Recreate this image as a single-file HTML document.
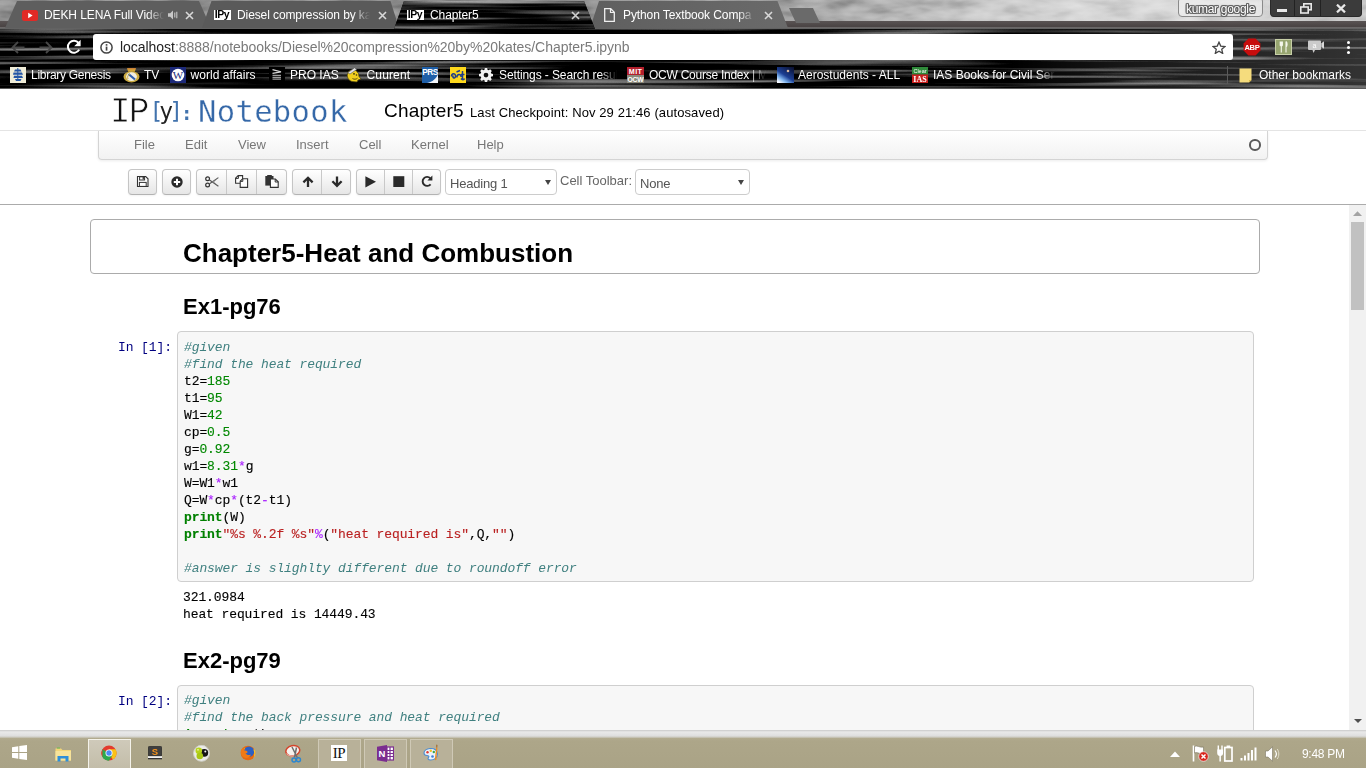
<!DOCTYPE html>
<html>
<head>
<meta charset="utf-8">
<title>Chapter5</title>
<style>
*{box-sizing:border-box;margin:0;padding:0}
html,body{width:1366px;height:768px;overflow:hidden;background:#fff;font-family:"Liberation Sans",sans-serif;}
.abs{position:absolute}
#root{position:relative;width:1366px;height:768px;overflow:hidden;background:#fff}

/* ---------- browser frame ---------- */
.tab{top:1px;height:27px}
.tabtxt{top:8px;font-size:12px;color:#fff;white-space:nowrap;overflow:hidden;letter-spacing:-0.1px}
.chrome-txt{font-size:12px;color:#fff;white-space:nowrap;letter-spacing:-0.1px}
#urlbar{left:93px;top:34px;width:1140px;height:26px;background:#fff;border-radius:3px}
#urltxt{left:120px;top:39px;font-size:14px;color:#7a7a7a;white-space:nowrap;letter-spacing:-0.035px}
#urltxt b{font-weight:normal;color:#222}
.mk{-webkit-mask-image:linear-gradient(90deg,#000 0,#000 calc(100% - 17px),transparent 100%);mask-image:linear-gradient(90deg,#000 0,#000 calc(100% - 17px),transparent 100%)}
.bm{top:68px;font-size:12px;color:#fff;white-space:nowrap}


/* chrome details */
#frame{left:0;top:0;width:1366px;height:29px;background:linear-gradient(90deg,#8c8c8c 0,#8a8a8a 300px,#929292 600px,#a2a2a2 800px,#b4b4b4 900px,#cacaca 1000px,#d4d4d4 1100px,#dadada 1180px,#c8c8c8 1366px)}
#frameband{left:0;top:21px;width:1366px;height:8px;background:linear-gradient(#5a5454 0,#4b4545 5px,#4b4545 6px,#8a8a8a 7px,#3a3a3a 8px)}
#navbar{left:0;top:29px;width:1366px;height:60px;background:
 linear-gradient(90deg,rgba(70,70,70,.0) 0,rgba(90,90,90,.55) 30%,rgba(60,60,60,.2) 60%,rgba(90,90,90,.5) 100%) 0 16px/1366px 3px no-repeat,
 linear-gradient(90deg,rgba(80,80,80,.5) 0,rgba(60,60,60,.15) 40%,rgba(90,90,90,.5) 75%,rgba(60,60,60,.2) 100%) 0 33px/1366px 3px no-repeat,
 linear-gradient(90deg,rgba(60,60,60,.2) 0,rgba(90,90,90,.5) 50%,rgba(70,70,70,.3) 100%) 0 44px/1366px 2px no-repeat,
 linear-gradient(90deg,rgba(90,90,90,.5) 0,rgba(60,60,60,.2) 50%,rgba(90,90,90,.5) 100%) 0 54px/1366px 3px no-repeat,
 #050505}
#navbot{left:0;top:88px;width:1366px;height:1px;background:#5a5a5a}
.tabi{background:#5e5e5e}
.taba{background:
 linear-gradient(90deg,rgba(120,120,120,.6),rgba(80,80,80,.25) 50%,rgba(120,120,120,.55)) 0 6px/100% 3px no-repeat,
 linear-gradient(90deg,rgba(90,90,90,.3),rgba(130,130,130,.6) 60%,rgba(80,80,80,.3)) 0 13px/100% 3px no-repeat,
 linear-gradient(90deg,rgba(120,120,120,.55),rgba(80,80,80,.25) 40%,rgba(120,120,120,.5)) 0 20px/100% 3px no-repeat,
 #111}
.x{position:absolute;top:11px;width:9px;height:9px}
.fav{position:absolute;top:10px;width:17px;height:10px;background:#fff;color:#000;font-size:10.500px;line-height:9px;font-weight:bold;letter-spacing:-0.500px;text-align:center;overflow:visible;white-space:nowrap;text-indent:-1px}
#wctl{left:1270px;top:0;width:92px;height:17px;background:#3b3b3b;border-radius:0 0 4px 4px;border:1px solid #2a2a2a;border-top:none}
#prof{left:1178px;top:-3.500px;width:85px;height:20px;border:1px solid #8a8a8a;border-radius:4px;background:rgba(255,255,255,.38);color:#fff;font-size:12px;line-height:21px;text-align:center;letter-spacing:-0.300px;text-shadow:0 0 1px #555,0 0 2px #555,1px 0 0 #666,-1px 0 0 #666,0 1px 0 #666,0 -1px 0 #666,1px 1px 0 #777,-1px -1px 0 #777,1px -1px 0 #777,-1px 1px 0 #777;white-space:nowrap;padding-top:1px}


.tbtn{top:739px;height:29px;border:1px solid #cfc9b6;border-bottom:none;background:#b8b199}

/* ---------- page ---------- */
#page{left:0;top:89px;width:1366px;height:641px;background:#fff;overflow:hidden}
#winborder{left:0;top:730px;width:1366px;height:8px;background:linear-gradient(#c9c9c9 0,#e9e9e9 2px,#dedede 6px,#bdb8a5 8px)}
#taskbar{left:0;top:738px;width:1366px;height:30px;background:linear-gradient(#b2ab90 0,#ada689 3px,#aaa386 100%)}

/* notebook */
#logo_ip{-webkit-text-stroke:0.7px #fff;left:110px;top:90px;font-family:"Liberation Mono",monospace;font-size:34px;line-height:40px;color:#111;letter-spacing:-1.5px;white-space:nowrap;transform:scaleY(1.09);transform-origin:0 0}
#logo_y{left:149.5px;top:96.7px;font-family:"DejaVu Sans Mono","Liberation Mono",monospace;font-size:23px;line-height:28px;color:#4273ad;letter-spacing:-4px;white-space:nowrap}
#logo_y i{font-style:normal;color:#222}
#logo_c{left:181px;top:98.5px;font-weight:bold;font-family:"DejaVu Sans Mono","Liberation Mono",monospace;font-size:19px;line-height:28px;color:#4273ad;white-space:nowrap}
#logo_nb{-webkit-text-stroke:0.3px #fff;left:198px;top:91.5px;font-family:"DejaVu Sans Mono","Liberation Mono",monospace;font-size:30.5px;line-height:40px;color:#3568a8;letter-spacing:0.35px;white-space:nowrap}
#nbname{left:384px;top:100px;font-size:19px;letter-spacing:0.2px;line-height:22px;color:#000;white-space:nowrap}
#ckpt{left:470px;top:104px;font-size:13px;letter-spacing:0.1px;line-height:18px;color:#000;white-space:nowrap}
#hdrline{left:0;top:130px;width:1366px;height:1px;background:#e4e4e4}
#menubar{left:98px;top:131px;width:1170px;height:29px;border:1px solid #d4d4d4;border-top:none;border-radius:0 0 4px 4px;background:linear-gradient(#ffffff,#f2f2f2);box-shadow:0 1px 3px rgba(0,0,0,0.08)}
.mi{top:137px;font-size:13px;line-height:15px;color:#777;white-space:nowrap}
#kind{left:1249px;top:139px;width:11.500px;height:11.500px;border:2px solid #5a5a5a;border-radius:50%}
.btn{top:169px;height:26px;border:1px solid #c5c5c5;border-bottom-color:#b3b3b3;border-radius:4px;background:linear-gradient(#ffffff,#e6e6e6);box-shadow:0 1px 2px rgba(0,0,0,0.05)}
.btn i{position:absolute;top:0;width:1px;height:24px;background:#c9c9c9}
.sel{top:169px;height:26px;border:1px solid #ccc;border-radius:4px;background:#fff;letter-spacing:-0.200px;font-size:13px;line-height:15px;color:#555;padding:6px 0 0 4px;white-space:nowrap}
.sel:after{content:"";position:absolute;right:5.500px;top:9.500px;border-left:3.200px solid transparent;border-right:3.200px solid transparent;border-top:5.500px solid #444}
#ctlabel{left:560px;top:173px;font-size:13px;line-height:16px;color:#666;white-space:nowrap}
#tbline{left:0;top:204px;width:1366px;height:1px;background:#ababab}
#selcell{left:90px;top:219px;width:1170px;height:55px;border:1px solid #ababab;border-radius:4px;background:#fff}
.h1{left:183px;font-weight:bold;color:#000;white-space:nowrap}
.prompt{font-family:"Liberation Mono",monospace;font-size:13px;letter-spacing:-0.1px;line-height:17px;color:#000080;white-space:pre}
.inarea{left:177px;width:1077px;border:1px solid #cfcfcf;border-radius:4px;background:#f7f7f7}
pre{-webkit-text-stroke:0.12px;font-family:"Liberation Mono",monospace;font-size:13px;letter-spacing:-0.1px;line-height:17px;color:#000;white-space:pre}
pre.code{left:184px}
pre.out{left:183px}
.c{color:#408080;font-style:italic;-webkit-text-stroke:0}
.n{color:#008800}
.o{color:#aa22ff}
.k{color:#008000;font-weight:bold}
.s{color:#ba2121}
#vscroll{left:1349px;top:115px;width:17px;height:526px;background:#f1f1f1}
#vthumb{left:1351px;top:131px;width:13px;height:90px;background:#c1c1c1}

.ic{position:absolute;overflow:visible}
</style>
</head>
<body>
<div id="root">

<!-- BROWSER FRAME -->
<div id="frame" class="abs"></div>
<svg class="abs" style="left:0;top:0;mix-blend-mode:soft-light" width="1366" height="22" viewBox="0 0 1366 22"><defs><filter id="cloud" x="0" y="0" width="100%" height="100%" color-interpolation-filters="sRGB"><feTurbulence type="fractalNoise" baseFrequency="0.030 0.090" numOctaves="3" seed="4"/><feColorMatrix type="matrix" values="0.900 0 0 0 0.070  0.900 0 0 0 0.070  0.900 0 0 0 0.070  0 0 0 0 1"/></filter></defs><rect width="1366" height="22" filter="url(#cloud)"/></svg>
<div id="frameband" class="abs"></div>
<div id="navbar" class="abs"></div>
<svg class="abs" style="left:0;top:29px" width="1366" height="60" viewBox="0 0 1366 60">
<defs>
<filter id="streak" x="0" y="0" width="100%" height="100%" color-interpolation-filters="sRGB">
<feTurbulence type="fractalNoise" baseFrequency="0.004 0.22" numOctaves="2" seed="11" result="n"/>
<feColorMatrix in="n" type="matrix" values="1.6 0 0 0 -0.78  1.6 0 0 0 -0.78  1.6 0 0 0 -0.78  0 0 0 0 1"/>
</filter>
</defs>
<rect width="1366" height="60" filter="url(#streak)"/>
<linearGradient id="rl" x1="0" y1="0" x2="1" y2="0"><stop offset="0" stop-color="#fff" stop-opacity="0"/><stop offset=".74" stop-color="#fff" stop-opacity="0"/><stop offset=".82" stop-color="#fff" stop-opacity=".09"/><stop offset="1" stop-color="#fff" stop-opacity=".2"/></linearGradient>
<rect width="1366" height="60" fill="url(#rl)"/>
</svg>

<!-- tabs -->
<div class="abs tab tabi" style="left:5px;width:206px;clip-path:polygon(0 100%,12px 0,194px 0,100% 100%)"></div>
<div class="abs tab tabi" style="left:202px;width:197px;clip-path:polygon(0 100%,9.500px 0,188.500px 0,100% 100%);background:#5a5a5a"></div>
<div class="abs tab tabi" style="left:590px;width:198px;clip-path:polygon(0 100%,9px 0,187.500px 0,100% 100%);background:linear-gradient(90deg,#5f5f5f,#6a6a6a)"></div>
<div class="abs tab" style="left:394px;width:201px;height:28px;background:#0a0a0a;clip-path:polygon(0 100%,10px 0,190px 0,100% 100%)"><svg width="201" height="28" viewBox="0 0 201 28" style="display:block"><defs><filter id="streak2" x="0" y="0" width="100%" height="100%" color-interpolation-filters="sRGB"><feTurbulence type="fractalNoise" baseFrequency="0.006 0.210" numOctaves="2" seed="5"/><feColorMatrix type="matrix" values="1.5 0 0 0 -0.66  1.5 0 0 0 -0.66  1.5 0 0 0 -0.66  0 0 0 0 1"/></filter></defs><rect width="201" height="28" filter="url(#streak2)"/></svg></div>
<div class="abs" style="left:789px;top:8px;width:31px;height:15px;background:#6a6a6a;clip-path:polygon(0 0,24px 0,100% 100%,7px 100%)"></div>

<!-- tab1 -->
<svg class="abs" style="left:22px;top:10px" width="16" height="11" viewBox="0 0 16 11"><rect width="16" height="11" rx="2.5" fill="#e02a26"/><path d="M6.2 2.8L10.6 5.5 6.2 8.2z" fill="#fff"/></svg>
<div class="abs tabtxt mk" style="left:44px;width:120px">DEKH LENA Full Video</div>
<svg class="abs" style="left:168px;top:10px" width="11" height="10" viewBox="0 0 11 10"><path d="M0 3.2h2.2L5 0.6v8.8L2.2 6.8H0z" fill="#c8c8c8"/><path d="M6.8 2.6v4.8M8.8 1.8v6.4" stroke="#c8c8c8" stroke-width="1.1"/></svg>
<svg class="x" style="left:185px" viewBox="0 0 9 9"><path d="M1 1l7 7M8 1l-7 7" stroke="#d8d8d8" stroke-width="1.6"/></svg>
<!-- tab2 -->
<div class="fav" style="left:214px">IPy</div>
<div class="abs tabtxt mk" style="left:237px;width:133px">Diesel compression by ka</div>
<svg class="x" style="left:378px" viewBox="0 0 9 9"><path d="M1 1l7 7M8 1l-7 7" stroke="#d8d8d8" stroke-width="1.6"/></svg>
<!-- tab3 -->
<div class="fav" style="left:407px">IPy</div>
<div class="abs tabtxt" style="left:430px;width:130px">Chapter5</div>
<svg class="x" style="left:571px" viewBox="0 0 9 9"><path d="M1 1l7 7M8 1l-7 7" stroke="#cfcfcf" stroke-width="1.6"/></svg>
<!-- tab4 -->
<svg class="abs" style="left:604px;top:8px" width="11" height="14" viewBox="0 0 11 14"><path d="M0.7 0.7h6l3.6 3.6v9h-9.6z" fill="none" stroke="#f0f0f0" stroke-width="1.3"/><path d="M6.5 0.7v3.8h3.8" fill="none" stroke="#f0f0f0" stroke-width="1.2"/></svg>
<div class="abs tabtxt mk" style="left:623px;width:132px">Python Textbook Compa</div>
<svg class="x" style="left:764px" viewBox="0 0 9 9"><path d="M1 1l7 7M8 1l-7 7" stroke="#d8d8d8" stroke-width="1.6"/></svg>

<!-- window controls -->
<div id="prof" class="abs">kumar google</div>
<div id="wctl" class="abs"></div>
<div class="abs" style="left:1294px;top:0;width:1px;height:16px;background:#222"></div>
<div class="abs" style="left:1320px;top:0;width:1px;height:16px;background:#222"></div>
<div class="abs" style="left:1277px;top:9px;width:10px;height:3px;background:#e8e8e8"></div>
<svg class="abs" style="left:1300px;top:3px" width="12" height="11" viewBox="0 0 12 11"><rect x="3.8" y="0.8" width="7.4" height="6" fill="none" stroke="#e8e8e8" stroke-width="1.6"/><rect x="0.8" y="4" width="7.4" height="6" fill="#3b3b3b" stroke="#e8e8e8" stroke-width="1.6"/></svg>
<svg class="abs" style="left:1336px;top:4px" width="10" height="9" viewBox="0 0 10 9"><path d="M1 0.6l8 7.8M9 0.6l-8 7.8" stroke="#e8e8e8" stroke-width="2.2"/></svg>

<!-- nav buttons -->
<svg class="abs" style="left:11px;top:41px" width="14" height="13" viewBox="0 0 14 13"><path d="M13.5 6.5H1.8M7 1L1.5 6.5 7 12" fill="none" stroke="#484848" stroke-width="1.8"/></svg>
<svg class="abs" style="left:39px;top:41px" width="14" height="13" viewBox="0 0 14 13"><path d="M0.5 6.5h11.7M7 1l5.5 5.5L7 12" fill="none" stroke="#484848" stroke-width="1.8"/></svg>
<svg class="abs" style="left:66px;top:39px" width="16" height="16" viewBox="0 0 16 16"><path d="M13.2 10.6A6 6 0 1 1 12.6 4" fill="none" stroke="#fff" stroke-width="2"/><path d="M14.6 0.8v6.4H8.2z" fill="#fff"/></svg>

<!-- bookmarks -->
<svg class="abs" style="left:10px;top:67px" width="16" height="16" viewBox="0 0 16 16"><rect width="16" height="16" fill="#efecd8"/><path d="M5 2.500h5.500l1 2H4zM3.500 5.500h8.500l1 2.200H3zM4 8.700h8l1 2.200H3.500zM5 12h6.500l-1 2H6z" fill="#2456a6"/><rect x="7.300" y="1" width="1" height="13" fill="#2456a6"/></svg>
<div class="abs bm" style="left:31px;letter-spacing:-0.28px">Library Genesis</div>
<svg class="abs" style="left:122.500px;top:67.500px" width="17" height="15" viewBox="0 0 17 15"><path d="M4 0.300h9l-1.200 3.400H5.200z" fill="#d2a436"/><path d="M4.500 0.300h8v1h-8z" fill="#d8803a"/><ellipse cx="8.500" cy="8.800" rx="8" ry="5.600" fill="#c9a941"/><ellipse cx="8.500" cy="8.600" rx="5.400" ry="4.300" fill="#f1eee2"/><path d="M5.500 6l6.500 5.500" stroke="#2c5cad" stroke-width="2.200"/><path d="M5 11c-1-2 0-4.500 2-5" fill="none" stroke="#d0aa3c" stroke-width="1"/></svg>
<div class="abs bm" style="left:144px">TV</div>
<svg class="abs" style="left:170px;top:67px" width="16" height="16" viewBox="0 0 16 16"><rect width="16" height="16" fill="#1d2a7a"/><circle cx="8" cy="8" r="6.300" fill="#fff"/><text x="8" y="11.800" font-family="Liberation Serif, serif" font-size="11" fill="#1d2a7a" text-anchor="middle">W</text></svg>
<div class="abs bm" style="left:190.500px;letter-spacing:0.05px">world affairs</div>
<svg class="abs" style="left:269px;top:67px" width="16" height="15" viewBox="0 0 16 15"><rect width="16" height="15" fill="#000"/><path d="M3.500 2.600L12 4.900 3.500 6.400" fill="none" stroke="#d8d8d8" stroke-width="1.100"/><path d="M3.500 8.400h8.500M3.500 10.300h8.500M3.500 12.200h8.500" stroke="#9c9c9c" stroke-width="1.200"/></svg>
<div class="abs bm" style="left:290px">PRO IAS</div>
<svg class="abs" style="left:346px;top:67px" width="16" height="16" viewBox="0 0 16 16"><path d="M2 5.500C3.500 3 7 2 10 3.500l2.500 3 .5 3 2 2.500-3 1-1 2-5-.5C2.500 13.500 0 9.500 2 5.500z" fill="#f2d01e" stroke="#4a4210" stroke-width=".7"/><path d="M1.800 5.800L8.500 0.800l2.200 1.700-6.700 4.500z" fill="#e4e4e4" stroke="#555" stroke-width=".6"/><circle cx="8" cy="6.800" r=".9" fill="#3a3208"/><circle cx="10.500" cy="8" r=".8" fill="#3a3208"/><path d="M6.500 11.500c1.500 1 3.500 1 5-.3" fill="none" stroke="#3a3208" stroke-width=".8"/></svg>
<div class="abs bm" style="left:366.500px;letter-spacing:0.150px">Cuurent</div>
<svg class="abs" style="left:422px;top:67px" width="16" height="16" viewBox="0 0 16 16"><rect width="16" height="16" fill="#1f5fa8"/><path d="M16 7c-1.500 4.500-5.500 8-11 9h11z" fill="#f4f7fb"/><text x="8" y="7.600" font-family="Liberation Sans, sans-serif" font-size="8.200" font-weight="bold" fill="#fff" text-anchor="middle" letter-spacing="-0.500">PRS</text></svg>
<svg class="abs" style="left:450px;top:67px" width="16" height="16" viewBox="0 0 16 16"><rect width="16" height="16" fill="#fdd81c"/><path d="M1.500 9.500c0-3.500 4-3.500 4-.5s-3 2.500-2.500-.5M7 10.500c-.5-4 4.500-4 4-.500M6.500 5l3.500-1.500M12.500 4v8.500M11 7.500h3.500M11 11.500c1 1.500 3 1.500 3.500 0" stroke="#1c3c8c" stroke-width="1.500" fill="none"/></svg>
<svg class="abs" style="left:478.500px;top:67.800px" width="14" height="14" viewBox="0 0 16 16"><path d="M6.700 0h2.600l.4 2.100 1.300.55 1.800-1.200 1.850 1.850-1.200 1.800.55 1.300 2.100.4v2.600l-2.100.4-.55 1.300 1.200 1.800-1.850 1.850-1.800-1.200-1.300.55-.4 2.100H6.700l-.4-2.100-1.300-.55-1.800 1.200-1.850-1.850 1.200-1.800L2 9.800l-2.100-.4V6.800L2 6.400l.55-1.300-1.200-1.800L3.200 1.450 5 2.650l1.300-.55z" fill="#f2f2f2"/><circle cx="8" cy="8.100" r="2.700" fill="#111"/></svg>
<div class="abs bm mk" style="left:499px;width:118px;overflow:hidden;letter-spacing:-0.100px">Settings - Search resul</div>
<svg class="abs" style="left:627px;top:67px" width="17" height="16" viewBox="0 0 17 16"><rect width="17" height="8" fill="#b31f2c"/><rect y="8" width="17" height="8" fill="#8b897b"/><text x="8.500" y="6.800" font-family="Liberation Sans, sans-serif" font-size="7.200" font-weight="bold" fill="#fff" text-anchor="middle" letter-spacing="0.300">MIT</text><text x="8.500" y="14.800" font-family="Liberation Sans, sans-serif" font-size="6.800" font-weight="bold" fill="#fff" text-anchor="middle" letter-spacing="-0.200">OCW</text></svg>
<div class="abs bm mk" style="left:649px;width:117px;overflow:hidden;letter-spacing:-0.25px">OCW Course Index | M</div>
<svg class="abs" style="left:777px;top:67px" width="17" height="16" viewBox="0 0 17 16"><defs><linearGradient id="aero" x1="0.900" y1="0" x2="0.200" y2="1"><stop offset="0" stop-color="#0a1030"/><stop offset=".55" stop-color="#1c3f94"/><stop offset=".8" stop-color="#7fb4ee"/><stop offset="1" stop-color="#f4f8ff"/></linearGradient></defs><rect width="17" height="16" fill="url(#aero)"/><circle cx="11" cy="4" r="1.300" fill="#d8b8a0"/></svg>
<div class="abs bm" style="left:798px">Aerostudents - ALL</div>
<svg class="abs" style="left:912px;top:67px" width="16" height="16" viewBox="0 0 16 16"><rect width="16" height="7.500" fill="#2f8a3a"/><rect y="7.500" width="16" height="8.500" fill="#c8201e"/><text x="8" y="6" font-family="Liberation Sans, sans-serif" font-size="5.500" fill="#fff" text-anchor="middle">Clear</text><text x="8" y="14.500" font-family="Liberation Serif, serif" font-size="8" font-weight="bold" fill="#fff" text-anchor="middle">IAS</text></svg>
<div class="abs bm mk" style="left:933px;width:122px;overflow:hidden">IAS Books for Civil Ser</div>
<div class="abs" style="left:1227px;top:66px;width:1px;height:18px;background:#5a5a5a"></div>
<svg class="abs" style="left:1239px;top:68px" width="13" height="15" viewBox="0 0 13 15"><path d="M0.500 0.500h12v11.500l-2.500 2.500h-9.500z" fill="#f5dc7d"/><path d="M12.500 12l-2.500 2.500v-2.500z" fill="#d9b84a"/></svg>
<div class="abs bm" style="left:1259px">Other bookmarks</div>
<div id="navbot" class="abs"></div>
<div id="urlbar" class="abs"></div>
<div id="urltxt" class="abs"><b>localhost</b>:8888/notebooks/Diesel%20compression%20by%20kates/Chapter5.ipynb</div>


<svg class="abs" style="left:100px;top:41px" width="13" height="13" viewBox="0 0 13 13"><circle cx="6.5" cy="6.5" r="5.600" fill="none" stroke="#444" stroke-width="1.500"/><rect x="5.700" y="5.600" width="1.700" height="4" fill="#444"/><rect x="5.700" y="3.100" width="1.700" height="1.600" fill="#444"/></svg>
<svg class="abs" style="left:1212px;top:41px" width="14" height="13" viewBox="0 0 14 13"><path d="M7 1.2l1.75 3.9 4.2.4-3.2 2.8.95 4.1L7 10.2l-3.7 2.2.95-4.1L1.05 5.5l4.2-.4z" fill="none" stroke="#444" stroke-width="1.3" stroke-linejoin="miter"/></svg>
<!-- extensions -->
<svg class="abs" style="left:1243px;top:38px" width="18" height="18" viewBox="0 0 18 18"><path d="M5.4 0.6h7.2l4.8 4.8v7.2l-4.8 4.8H5.4L0.6 12.600V5.4z" fill="#c70d0d"/><text x="9" y="12" font-family="Liberation Sans, sans-serif" font-size="7.6" font-weight="bold" fill="#fff" text-anchor="middle" letter-spacing="-0.3">ABP</text></svg>
<svg class="abs" style="left:1275px;top:39px" width="17" height="16" viewBox="0 0 17 16"><rect x="0.5" y="0.5" width="16" height="15" fill="#97a570" stroke="#c8d0a8"/><path d="M5.2 2.5v4.2M7.4 2.5v4.2M6.3 2.5v11M5.2 6.6h2.2M11 2.5v11M11 2.5c1.5 1 1.5 4.5 0 5.500" stroke="#f4f6ea" stroke-width="1.1" fill="none"/></svg>
<svg class="abs" style="left:1307px;top:40px" width="18" height="14" viewBox="0 0 18 14"><path d="M2 0.500h11a1 1 0 0 1 1 1v7.500a1 1 0 0 1-1 1h-5l-1.500 3-1-3h-3.500a1 1 0 0 1-1-1v-7.500a1 1 0 0 1 1-1z" fill="#cbcbcb"/><path d="M14.300 3.200l2.700-2v7.600l-2.700-2z" fill="#d8d8d8"/><text x="7.500" y="7.800" font-family="Liberation Sans, sans-serif" font-size="7" fill="#fff" text-anchor="middle">a</text></svg>
<div class="abs" style="left:1347px;top:41px;width:3px;height:3px;border-radius:50%;background:#fff;box-shadow:0 5px 0 #fff,0 10px 0 #fff"></div>

<!-- PAGE -->
<div id="page" class="abs">
<div style="position:absolute;left:0;top:-89px;width:1366px;height:900px">
<div id="logo_ip" class="abs">IP</div>
<div id="logo_y" class="abs">[<i>y</i>]</div>
<div id="logo_c" class="abs">:</div>
<div id="logo_nb" class="abs">Notebook</div>
<div id="nbname" class="abs">Chapter5</div>
<div id="ckpt" class="abs">Last Checkpoint: Nov 29 21:46 (autosaved)</div>
<div id="hdrline" class="abs"></div>
<div id="menubar" class="abs"></div>
<div class="abs mi" style="left:134px">File</div>
<div class="abs mi" style="left:185px">Edit</div>
<div class="abs mi" style="left:238px">View</div>
<div class="abs mi" style="left:296px">Insert</div>
<div class="abs mi" style="left:359px">Cell</div>
<div class="abs mi" style="left:411px">Kernel</div>
<div class="abs mi" style="left:477px">Help</div>
<div id="kind" class="abs"></div>

<div class="abs btn" style="left:128px;width:29px"></div>
<div class="abs btn" style="left:162px;width:29px"></div>
<div class="abs btn" style="left:196px;width:91px"><i style="left:29px"></i><i style="left:59px"></i></div>
<div class="abs btn" style="left:292px;width:59px"><i style="left:28px"></i></div>
<div class="abs btn" style="left:356px;width:85px"><i style="left:27px"></i><i style="left:55px"></i></div>
<div class="abs sel" style="left:445px;width:112px">Heading 1</div>
<div id="ctlabel" class="abs">Cell Toolbar:</div>
<div class="abs sel" style="left:635px;width:115px">None</div>

<!-- toolbar icons -->
<svg class="ic" style="left:137px;top:176px" width="12" height="12" viewBox="0 0 12 12"><path d="M0.5 0.5h8.2l2.3 2.3v7.7h-10.5z" fill="#fff" stroke="#333" stroke-width="1.1"/><rect x="2.6" y="0.8" width="5" height="3.2" fill="none" stroke="#333" stroke-width="1"/><rect x="5.6" y="1" width="1.3" height="2.4" fill="#333"/><rect x="2.4" y="6.4" width="6.8" height="4" fill="none" stroke="#333" stroke-width="1"/></svg>
<svg class="ic" style="left:171px;top:175.5px" width="12" height="12" viewBox="0 0 12 12"><circle cx="6" cy="6" r="5.7" fill="#2a2a2a"/><path d="M6 2.8v6.4M2.8 6h6.4" stroke="#fff" stroke-width="2"/></svg>
<svg class="ic" style="left:205px;top:175.5px" width="14" height="12" viewBox="0 0 14 12"><circle cx="2.6" cy="2.8" r="1.9" fill="none" stroke="#333" stroke-width="1.2"/><circle cx="2.6" cy="9" r="1.9" fill="none" stroke="#333" stroke-width="1.2"/><path d="M4.2 3.8L13.4 10.2M4.2 8L13.4 1.6" stroke="#555" stroke-width="1.1" fill="none"/><path d="M7 5.2l6.4 4.8-4.4-4.1 4.4-4.1-6.4 4.8" fill="#888"/></svg>
<svg class="ic" style="left:235px;top:175px" width="14" height="13" viewBox="0 0 14 13"><path d="M0.6 3.2l2.6-2.6h4.4v7.6h-7z" fill="#fff" stroke="#333" stroke-width="1.1"/><path d="M0.6 3.4h2.8v-2.8" fill="none" stroke="#333" stroke-width="1"/><path d="M5.2 6.2l2.4-2.4h5v8.6h-7.4z" fill="#fff" stroke="#333" stroke-width="1.1"/><path d="M5.2 6.4h2.6v-2.6" fill="none" stroke="#333" stroke-width="1"/></svg>
<svg class="ic" style="left:265px;top:175px" width="14" height="13" viewBox="0 0 14 13"><path d="M0.3 1h8.2v9.6h-8.2z" fill="#333"/><rect x="2.2" y="0" width="4.6" height="1.6" fill="#333"/><path d="M5.4 4h5l2.8 2.8v5.6h-7.8z" fill="#fff" stroke="#333" stroke-width="1.1"/><path d="M10.2 4v3h3" fill="none" stroke="#333" stroke-width="1"/></svg>
<svg class="ic" style="left:301.5px;top:176px" width="12" height="12" viewBox="0 0 12 12"><path d="M6 11V2.2M1.4 6.4L6 1.8l4.6 4.6" fill="none" stroke="#2a2a2a" stroke-width="2.3" stroke-linejoin="miter"/></svg>
<svg class="ic" style="left:330.5px;top:176px" width="12" height="12" viewBox="0 0 12 12"><path d="M6 0.6v8.8M1.4 5.2L6 9.8l4.6-4.6" fill="none" stroke="#2a2a2a" stroke-width="2.3" stroke-linejoin="miter"/></svg>
<svg class="ic" style="left:365px;top:175.5px" width="12" height="12" viewBox="0 0 12 12"><path d="M0.4 0.2L11 5.8 0.4 11.4z" fill="#2a2a2a"/></svg>
<svg class="ic" style="left:392.5px;top:176px" width="12" height="12" viewBox="0 0 12 12"><rect x="0.3" y="0.2" width="11" height="10.8" fill="#2a2a2a"/></svg>
<svg class="ic" style="left:420.5px;top:175px" width="12" height="13" viewBox="0 0 12 13"><path d="M9.6 9.3A4.5 4.5 0 1 1 9.3 3.2" fill="none" stroke="#2a2a2a" stroke-width="1.9"/><path d="M11.4 0.6v5h-5z" fill="#2a2a2a"/></svg>
<div id="tbline" class="abs"></div>

<div id="selcell" class="abs"></div>
<div class="abs h1" style="top:237.7px;font-size:26px;line-height:30px">Chapter5-Heat and Combustion</div>
<div class="abs h1" style="top:293.6px;font-size:22px;line-height:26px">Ex1-pg76</div>

<div class="abs prompt" style="left:118px;top:339px">In [1]:</div>
<div class="abs inarea" style="top:331px;height:251px"></div>
<pre class="abs code" style="top:339px"><span class="c">#given</span>
<span class="c">#find the heat required</span>
t2=<span class="n">185</span>
t1=<span class="n">95</span>
W1=<span class="n">42</span>
cp=<span class="n">0.5</span>
g=<span class="n">0.92</span>
w1=<span class="n">8.31</span><span class="o">*</span>g
W=W1<span class="o">*</span>w1
Q=W<span class="o">*</span>cp<span class="o">*</span>(t2<span class="o">-</span>t1)
<span class="k">print</span>(W)
<span class="k">print</span><span class="s">"%s %.2f %s"</span><span class="o">%</span>(<span class="s">"heat required is"</span>,Q,<span class="s">""</span>)

<span class="c">#answer is slighlty different due to roundoff error</span></pre>
<pre class="abs out" style="top:589px">321.0984
heat required is 14449.43</pre>

<div class="abs h1" style="top:647.6px;font-size:22px;line-height:26px">Ex2-pg79</div>
<div class="abs prompt" style="left:118px;top:693px">In [2]:</div>
<div class="abs inarea" style="top:685px;height:200px"></div>
<pre class="abs code" style="top:691.5px"><span class="c">#given</span>
<span class="c">#find the back pressure and heat required</span>
<span class="k">import</span> math</pre>

<div id="vscroll" class="abs" style="top:205px"></div>
<div id="vthumb" class="abs" style="top:222px;height:88px"></div>
<svg class="abs" style="left:1353px;top:211px" width="9" height="5" viewBox="0 0 9 5"><path d="M0 5L4.500 0.300 9 5z" fill="#a3a3a3"/></svg>
<svg class="abs" style="left:1354px;top:719px" width="8" height="4" viewBox="0 0 8 4"><path d="M0 0h8L4 4z" fill="#505050"/></svg>
</div>
</div>

<div id="winborder" class="abs"></div>
<div id="taskbar" class="abs"></div>
<!-- taskbar items -->
<svg class="abs" style="left:12px;top:745px" width="15" height="15" viewBox="0 0 15 15"><path d="M0 2.200L6.300 1.200V7H0zM7.300 1.050L15 0v7H7.300zM0 8h6.300v5.800L0 12.800zM7.300 8H15v7l-7.700-1.050z" fill="#fff"/></svg>
<svg class="abs" style="left:55px;top:746px" width="17" height="16" viewBox="0 0 17 16"><path d="M0.500 2.500h5.500l1.500 1.500h8.500v10.500h-15.500z" fill="#f3d677"/><path d="M0.500 5h15.500v9.500h-15.500z" fill="#f7e39a"/><path d="M2.500 15.500v-5.500h11v5.500h-3v-3h-5v3z" fill="#2f8fd8"/><rect x="2" y="1.500" width="3" height="1" fill="#6cc04a"/></svg>
<div class="abs" style="left:88px;top:739px;width:43px;height:29px;border:1px solid #f4f2ea;border-bottom:none;background:linear-gradient(#cfcaba,#c3bda9)"></div>
<svg class="abs" style="left:101px;top:745px" width="16" height="16" viewBox="0 0 16 16"><circle cx="8" cy="8" r="7.600" fill="#e33b2e"/><path d="M8 8L1.420 11.800A7.600 7.600 0 0 1 1.420 4.200z" fill="#e33b2e"/><path d="M8 8L1.420 4.200 1.420 11.800A7.600 7.600 0 0 0 8 15.600L11.500 9z" fill="#2da94f"/><path d="M8 8l3.800 6.580A7.600 7.600 0 0 0 14.580 4.200H8z" fill="#fbc116"/><path d="M8 8L1.420 11.800A7.600 7.600 0 0 0 8 15.600l3.500-5.500z" fill="#2da94f"/><circle cx="8" cy="8" r="3.500" fill="#fff"/><circle cx="8" cy="8" r="2.700" fill="#4a8af4"/></svg>
<svg class="abs" style="left:148px;top:746px" width="14" height="14" viewBox="0 0 14 14"><rect x="0.400" y="0.400" width="13.200" height="9.800" rx="1" fill="#3f3f3f" stroke="#2a2a2a" stroke-width=".8"/><rect x="0" y="10.200" width="14" height="2" fill="#f0f0f0"/><rect x="0" y="12" width="14" height="1.300" fill="#333"/><text x="7" y="8.800" font-family="Liberation Sans, sans-serif" font-size="9.500" font-weight="bold" fill="#f7941e" text-anchor="middle">S</text></svg>
<svg class="abs" style="left:193px;top:745px" width="17" height="17" viewBox="0 0 17 17"><circle cx="8.500" cy="8.300" r="8" fill="#ecece8" stroke="#cfcfc6"/><circle cx="11.300" cy="7.800" r="3.900" fill="#151515"/><circle cx="5.800" cy="5.800" r="3.300" fill="#b6d21a"/><circle cx="6.800" cy="11" r="3.300" fill="#a9c714"/><circle cx="12.300" cy="6.500" r="1" fill="#f4f4f4"/><circle cx="5" cy="4.800" r="1" fill="#e4f08a"/></svg>
<svg class="abs" style="left:239.500px;top:745px" width="16" height="16" viewBox="0 0 16 16"><circle cx="8" cy="8" r="7.300" fill="#e66a12"/><circle cx="9" cy="6.600" r="5.200" fill="#2b5fc4"/><path d="M14.600 4.500c1.500 3 .8 6.500-1.200 8.500 1-2.500 1.200-5.500 0-8.500z" fill="#f9c42a"/><path d="M1 5c.5-.8 1.200-1.500 2-2-.2 1 .3 1.800 1.200 2.300 1.300.7 2.800.3 3.300 1.500.4 1-.8 1.700-2 1.500 1 1.800 3.500 2.300 5.500 1.200-1 2.500-3.500 4-6.200 3.200C2 12 0 8.500 1 5z" fill="#f07a16"/><path d="M3.200 4.200l1.300-1.800.8 2z" fill="#f29a22"/></svg>
<svg class="abs" style="left:285px;top:744px" width="18" height="19" viewBox="0 0 18 19"><ellipse cx="7.800" cy="6.800" rx="7" ry="5.200" fill="#f6f2ee" stroke="#d4452c" stroke-width="1.500" transform="rotate(-12 7.800 6.800)"/><path d="M1.500 9.500c1.500 2.500 6 3.500 10 1.500" fill="none" stroke="#e8b0a4" stroke-width="1.200"/><path d="M7 3l5.500 11M11.500 3.500L9.500 13.500" stroke="#6e6e6e" stroke-width="1.500"/><circle cx="13.500" cy="15.800" r="2" fill="none" stroke="#2b86d0" stroke-width="1.400"/><circle cx="9" cy="16" r="2" fill="none" stroke="#2b86d0" stroke-width="1.400"/></svg>
<div class="abs tbtn" style="left:318px;width:43px"></div>
<div class="abs" style="left:331px;top:745px;width:16px;height:16px;background:#fff;color:#111;font-family:'Liberation Serif',serif;font-size:15px;line-height:17px;text-align:center;letter-spacing:-0.300px">IP</div>
<div class="abs tbtn" style="left:364px;width:43px"></div>
<svg class="abs" style="left:377px;top:745px" width="17" height="17" viewBox="0 0 17 17"><path d="M0 1.800L10 0v17L0 15.200z" fill="#7b2d90"/><rect x="10" y="2" width="6.500" height="13" fill="#fff" stroke="#7b2d90" stroke-width="1.200"/><path d="M13 2v13M10 5.500h6.500M10 8.500h6.500M10 11.500h6.500" stroke="#7b2d90" stroke-width="1.200"/><text x="5" y="12" font-family="Liberation Sans, sans-serif" font-size="9.500" font-weight="bold" fill="#fff" text-anchor="middle">N</text></svg>
<div class="abs tbtn" style="left:410px;width:43px"></div>
<svg class="abs" style="left:423px;top:744px" width="17" height="18" viewBox="0 0 17 18"><path d="M7 4.500c4.500-.5 7.500 2 7.500 5.500s-3 6-7 6c-2.500 0-3-1.500-2-2.500s0-2-1.500-2-3-1-3-2.500c0-2.500 3-4.200 6-4.500z" fill="#eaf2fb" stroke="#4d8ccf" stroke-width="1.100"/><circle cx="4.500" cy="8.200" r="1.200" fill="#e23a2e"/><circle cx="7.800" cy="6.800" r="1.200" fill="#f3c019"/><circle cx="10.800" cy="8" r="1.200" fill="#3aa84a"/><circle cx="9.500" cy="12.500" r="1.300" fill="#3d7fd6"/><path d="M13.200 3.500l1.200.3-1 11.500-1.200 1.200-.3-1.600z" fill="#f08a1d"/><path d="M13 0.500l1.600.4-.3 2.800-1.300-.3z" fill="#a87a45"/></svg>
<!-- tray -->
<svg class="abs" style="left:1170px;top:751px" width="10" height="6" viewBox="0 0 10 6"><path d="M0 6L5 0.500 10 6z" fill="#fff"/></svg>
<svg class="abs" style="left:1192px;top:745px" width="17" height="17" viewBox="0 0 17 17"><path d="M1.500 0.500v16" stroke="#fff" stroke-width="1.600"/><path d="M2.500 1.500c3-1.500 5 1.500 9 0.500v6.500c-4 1-6-2-9-0.500z" fill="#fff" stroke="#6a6450" stroke-width=".5"/><circle cx="11.500" cy="11.500" r="4.800" fill="#d8261c" stroke="#f4f4f4" stroke-width=".7"/><path d="M9.500 9.500l4 4M13.500 9.500l-4 4" stroke="#fff" stroke-width="1.500"/></svg>
<svg class="abs" style="left:1217px;top:745px" width="16" height="17" viewBox="0 0 16 17"><rect x="7.800" y="2.500" width="7.200" height="13.500" fill="none" stroke="#fff" stroke-width="1.700"/><rect x="9.600" y="0.500" width="3.600" height="2" fill="#fff"/><path d="M1.300 0.500v4.500M5 0.500v4.500" stroke="#fff" stroke-width="1.400"/><path d="M0.200 4.500h5.900v3.500a2.950 2.950 0 0 1-5.900 0z" fill="#fff"/><path d="M3.150 10v6.500" stroke="#fff" stroke-width="1.500"/></svg>
<svg class="abs" style="left:1240px;top:747px" width="17" height="14" viewBox="0 0 17 14"><path d="M0.500 13.500h2v-2.500h-2zM4 13.500h2v-5h-2zM7.500 13.500h2v-7.500h-2zM11 13.500h2v-10.500h-2zM14.500 13.500h2v-13h-2z" fill="#fff"/></svg>
<svg class="abs" style="left:1265px;top:746px" width="15" height="16" viewBox="0 0 15 16"><path d="M0.500 5h2.500L7.500 0.800v14.400L3 11H0.500z" fill="#fff" stroke="#6a6450" stroke-width=".5"/><path d="M10 4.500c1.600 2 1.600 5 0 7" fill="none" stroke="#fff" stroke-width="1.200"/><path d="M12.300 3c2 3.200 2 6.800 0 10" fill="none" stroke="#e8e4d4" stroke-width=".9"/></svg>
<div class="abs" style="left:1302px;top:746.700px;font-size:12px;line-height:15px;color:#fff;white-space:nowrap;letter-spacing:-0.300px">9:48 PM</div>

</div>
</body>
</html>
